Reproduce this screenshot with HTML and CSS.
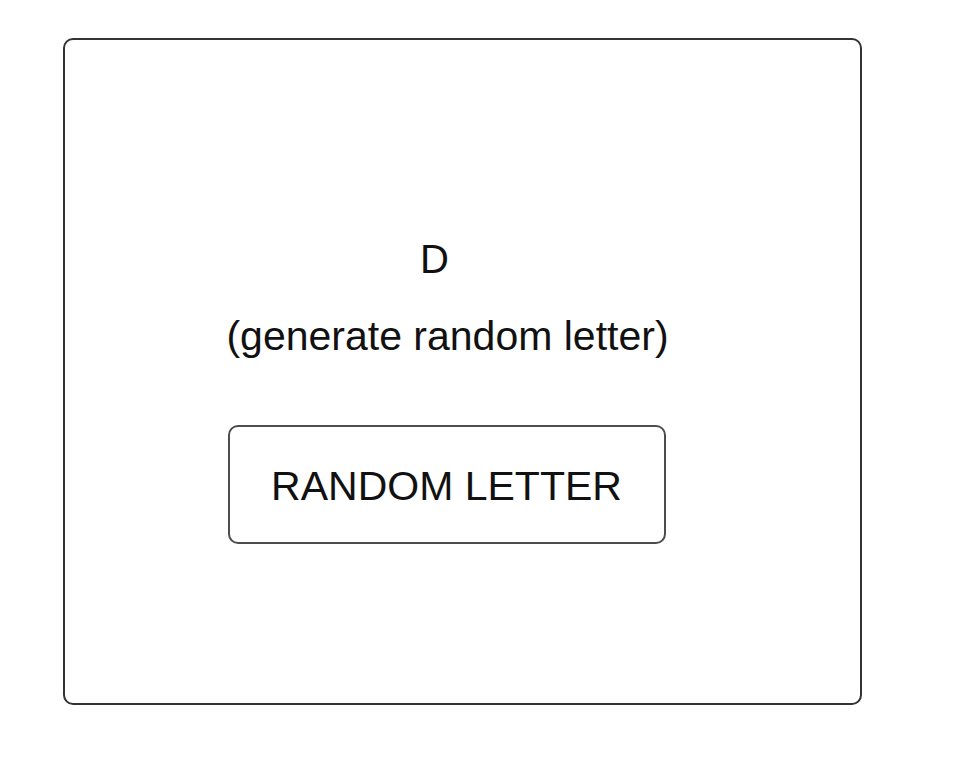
FILE: index.html
```html
<!DOCTYPE html>
<html lang="en">
<head>
<meta charset="utf-8">
<title>Random Letter</title>
<link rel="stylesheet" href="styles.css">
</head>
<body>
  <main class="frame">
    <div class="content">
      <div class="letter">D</div>
      <div class="caption">(generate random letter)</div>
      <button class="btn" type="button">RANDOM LETTER</button>
    </div>
  </main>
</body>
</html>
```

FILE: styles.css
```css
html, body {
  margin: 0;
  padding: 0;
  background: #ffffff;
}

body {
  font-family: "Liberation Sans", Arial, sans-serif;
  color: #111111;
}

.frame {
  box-sizing: border-box;
  margin: 38px 0 0 63px;
  width: 799px;
  height: 667px;
  border: 2px solid #333333;
  border-radius: 10px;
}

.content {
  display: flex;
  flex-direction: column;
  align-items: center;
  padding: 196px 30px 0 0;
}

.letter {
  font-size: 40px;
  line-height: 46px;
  margin-right: 26px;
}

.caption {
  font-size: 41px;
  line-height: 46px;
  margin-top: 31px;
}

.btn {
  box-sizing: border-box;
  margin-top: 66px;
  margin-right: 2px;
  width: 438px;
  height: 119px;
  display: flex;
  align-items: center;
  justify-content: center;
  padding: 2px 0 0 0;
  background: #ffffff;
  border: 2px solid #4d4d4d;
  border-radius: 10px;
  font-family: "Liberation Sans", Arial, sans-serif;
  font-size: 41px;
  line-height: 46px;
  color: #111111;
}
```
